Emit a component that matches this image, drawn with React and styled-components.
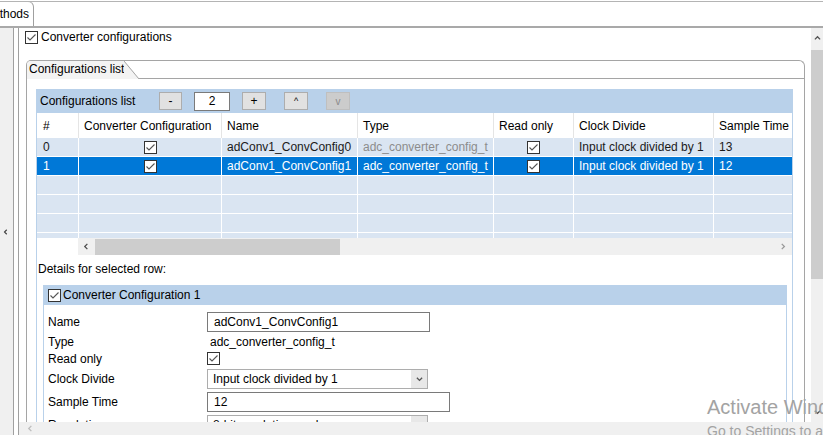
import React from "react";
import styled, { createGlobalStyle } from "styled-components";

const GlobalStyle = createGlobalStyle`
  html, body { margin: 0; padding: 0; background: #fff; }
  body {
    font-family: "Liberation Sans", Arial, sans-serif;
    font-size: 12px;
    color: #000;
  }
  * { box-sizing: border-box; }
`;

const BLUE = "#b9d1ea";
const ROW = "#dae5f2";
const SEL = "#0078d7";
const FRAME = "#a5a5a5";

const Window = styled.div`
  position: relative;
  width: 823px;
  height: 435px;
  overflow: hidden;
  background: #fff;
  display: flex;
  flex-direction: column;
  padding-top: 1px;
`;

const TopBar = styled.div`
  display: flex;
  flex-shrink: 0;
  height: 27px;
  border-top: 1px solid #b4b4b4;
  border-bottom: 2px solid #a9a9a9;
`;

const EditorTab = styled.div`
  width: 34px;
  height: 25px;
  margin-top: -1px;
  border-top: 1px solid #b4b4b4;
  border-right: 1px solid #a0a0a0;
  border-top-right-radius: 6px;
  overflow: hidden;
  white-space: nowrap;
  line-height: 24px;
  font-size: 12px;
  span { margin-left: -17px; }
`;

const Body = styled.div`
  flex: 1;
  display: flex;
  min-height: 0;
`;

const LeftRail = styled.div`
  width: 14px;
  background: #f0f0f0;
  border-right: 1px solid #a0a0a0;
  display: flex;
  align-items: center;
  padding-left: 3px;
`;

const Gutter = styled.div`
  width: 5px;
  border-right: 1px solid #a0a0a0;
`;

const Main = styled.div`
  flex: 1;
  display: flex;
  flex-direction: column;
  min-width: 0;
`;

const MainRow = styled.div`
  flex: 1;
  display: flex;
  min-height: 0;
`;

const Content = styled.div`
  flex: 1;
  overflow: hidden;
  padding: 2px 0 0 6px;
`;

const VScroll = styled.div`
  width: 12px;
  background: #f0f0f0;
  display: flex;
  flex-direction: column;
`;

const ScrollArrow = styled.div`
  height: ${(p) => p.h || 20}px;
  display: flex;
  align-items: center;
  justify-content: center;
  padding-right: ${(p) => p.pr || 0}px;
`;

const VThumb = styled.div`
  margin-top: 1px;
  height: 229px;
  background: #cdcdcd;
`;

const VTrack = styled.div`
  flex: 1;
`;

const HScroll = styled.div`
  height: 13px;
  background: #f0f0f0;
  display: flex;
  align-items: center;
  padding-left: 8px;
`;

const CheckRow = styled.div`
  display: flex;
  align-items: center;
  gap: 3px;
  height: 14px;
  line-height: 14px;
`;

const Box = styled.span`
  display: inline-flex;
  width: 13px;
  height: 13px;
  flex-shrink: 0;
  border: 1px solid #333;
  background: #fff;
  align-items: center;
  justify-content: center;
`;

const Folder = styled.div`
  margin: 16px 0 0 1px;
  width: 779px;
  height: 400px;
  border: 1px solid ${FRAME};
  border-bottom: none;
  border-radius: 5px 6px 0 0;
  overflow: hidden;
`;

const FolderTabs = styled.div`
  display: flex;
  height: 18px;
`;

const FolderTab = styled.div`
  position: relative;
  padding-left: 2px;
  line-height: 17px;
  background: #f3f3f3;
  &::after {
    content: "";
    position: absolute;
    left: 100%;
    top: 0;
    width: 15px;
    height: 18px;
    background: linear-gradient(
      to top right,
      #f3f3f3 calc(50% - 0.8px),
      ${FRAME} 50%,
      #fff calc(50% + 0.8px)
    );
  }
`;

const TabFill = styled.div`
  flex: 1;
  margin-left: 15px;
  border-bottom: 1px solid ${FRAME};
`;

const FolderBody = styled.div`
  padding: 10px 11px 0 9px;
`;

const Panel = styled.div`
  border-left: 1px solid ${BLUE};
  border-right: 1px solid ${BLUE};
  height: 360px;
`;

const ListBar = styled.div`
  height: 24px;
  background: ${BLUE};
  display: flex;
  align-items: center;
  gap: 12px;
  padding-left: 3px;
`;

const BarTitle = styled.span`
  width: 107px;
  white-space: nowrap;
`;

const BarButton = styled.div`
  width: ${(p) => p.w}px;
  height: 18px;
  margin-left: ${(p) => p.ml || 0}px;
  background: ${(p) => (p.disabled ? "#cccccc" : "#e1e1e1")};
  border: 1px solid ${(p) => (p.disabled ? "#bfbfbf" : "#adadad")};
  color: ${(p) => (p.disabled ? "#8a8a8a" : "#000")};
  display: flex;
  align-items: center;
  justify-content: center;
  font-size: ${(p) => p.fs || 12}px;
`;

const CountBox = styled.div`
  width: 36px;
  height: 19px;
  background: #fff;
  border: 1px solid #7a7a7a;
  display: flex;
  align-items: center;
  justify-content: center;
`;

const Grid = styled.div`
  display: grid;
  grid-template-columns: 41px 143px 136px 136px 80px 140px 90px;
  overflow: hidden;
`;

const HeadRow = styled(Grid)`
  height: 25px;
  background: #fff;
`;

const HeadCell = styled.div`
  display: flex;
  align-items: center;
  white-space: nowrap;
  overflow: hidden;
  padding-left: 5px;
  border-left: 1px solid #e5e5e5;
  &:first-child { border-left: none; padding-left: 6px; }
`;

const TableBody = styled.div`
  height: 100px;
  overflow: hidden;
`;

const BodyRow = styled(Grid)`
  height: 19px;
  border-bottom: 1px solid #fff;
  background: ${(p) => (p.selected ? SEL : ROW)};
  color: ${(p) => (p.selected ? "#fff" : "#1a1a1a")};
`;

const Cell = styled.div`
  display: flex;
  align-items: center;
  justify-content: ${(p) => (p.center ? "center" : "flex-start")};
  white-space: nowrap;
  overflow: hidden;
  padding-left: ${(p) => (p.center ? 0 : 5)}px;
  border-left: 1px solid #fff;
  color: ${(p) => p.muted || "inherit"};
  &:first-child { border-left: none; padding-left: 6px; }
`;

const TableScroll = styled.div`
  display: flex;
  height: 17px;
`;

const ScrollGap = styled.div`
  width: 41px;
  background: #fff;
`;

const HBar = styled.div`
  flex: 1;
  display: flex;
  align-items: center;
  background: #f0f0f0;
`;

const HThumb = styled.div`
  width: 245px;
  height: 16px;
  background: #cdcdcd;
`;

const DetailsLabel = styled.div`
  height: 30px;
  padding: 6px 0 0 1px;
  line-height: 16px;
`;

const Group = styled.div`
  margin: 0 5px 0 6px;
  border-left: 1px solid ${BLUE};
  border-right: 1px solid ${BLUE};
  height: 160px;
`;

const GroupHeader = styled.div`
  height: 20px;
  background: ${BLUE};
  display: flex;
  align-items: center;
  gap: 2px;
  padding-left: 4px;
`;

const Fields = styled.div`
  display: grid;
  grid-template-columns: 159px 1fr;
  grid-template-rows: 20px 14px 14px 20px 20px 20px;
  row-gap: 3px;
  align-items: center;
  padding: 7px 0 0 4px;
`;

const Label = styled.div`
  white-space: nowrap;
  align-self: ${(p) => p.align || "center"};
  line-height: 14px;
`;

const TextInput = styled.div`
  width: ${(p) => p.w}px;
  height: 20px;
  border: 1px solid #7a7a7a;
  background: #fff;
  padding-left: 6px;
  display: flex;
  align-items: center;
  white-space: nowrap;
`;

const Value = styled.div`
  padding-left: 3px;
  white-space: nowrap;
`;

const Select = styled.div`
  width: 221px;
  height: 20px;
  border: 1px solid #adadad;
  background: #fff;
  display: flex;
  align-items: stretch;
`;

const SelectText = styled.div`
  flex: 1;
  display: flex;
  align-items: center;
  padding-left: 5px;
  white-space: nowrap;
`;

const SelectArrow = styled.div`
  width: 16px;
  background: #e8e8e8;
  display: flex;
  align-items: center;
  justify-content: center;
`;

const Watermark = styled.div`
  position: absolute;
  left: 707px;
  top: ${(p) => p.top}px;
  font-size: ${(p) => p.size}px;
  color: #a3a3a3;
  white-space: nowrap;
  pointer-events: none;
`;

const Check = ({ color = "#555" }) => (
  <Box>
    <svg width="11" height="11" viewBox="0 0 11 11">
      <polyline points="1.5,5.5 4,8 9.5,2.5" fill="none" stroke={color} strokeWidth="1.1" />
    </svg>
  </Box>
);

const Chevron = ({ dir = "down", color = "#606060", size = 7 }) => {
  const pts = {
    down: "1,2 4,5 7,2",
    up: "1,5 4,2 7,5",
    left: "5,1 2,4 5,7",
    right: "2,1 5,4 2,7",
  }[dir];
  return (
    <svg width={size} height={size} viewBox="0 0 8 8">
      <polyline points={pts} fill="none" stroke={color} strokeWidth="1.5" />
    </svg>
  );
};

const columns = [
  "#",
  "Converter Configuration",
  "Name",
  "Type",
  "Read only",
  "Clock Divide",
  "Sample Time",
];

const rows = [
  { id: 0, name: "adConv1_ConvConfig0", type: "adc_converter_config_t", clock: "Input clock divided by 1", time: "13" },
  { id: 1, name: "adConv1_ConvConfig1", type: "adc_converter_config_t", clock: "Input clock divided by 1", time: "12", selected: true },
];

export default function App() {
  return (
    <>
      <GlobalStyle />
      <Window>
        <TopBar>
          <EditorTab>
            <span>Methods</span>
          </EditorTab>
        </TopBar>
        <Body>
          <LeftRail>
            <Chevron dir="left" color="#404040" size={6} />
          </LeftRail>
          <Gutter />
          <Main>
            <MainRow>
              <Content>
                <CheckRow>
                  <Check />
                  Converter configurations
                </CheckRow>
                <Folder>
                  <FolderTabs>
                    <FolderTab>Configurations list</FolderTab>
                    <TabFill />
                  </FolderTabs>
                  <FolderBody>
                    <Panel>
                      <ListBar>
                        <BarTitle>Configurations list</BarTitle>
                        <BarButton w={23}>-</BarButton>
                        <CountBox>2</CountBox>
                        <BarButton w={24}>+</BarButton>
                        <BarButton w={24} ml={6} fs={9}>^</BarButton>
                        <BarButton w={24} ml={6} fs={10} disabled>v</BarButton>
                      </ListBar>
                      <HeadRow>
                        {columns.map((c) => (
                          <HeadCell key={c}>{c}</HeadCell>
                        ))}
                      </HeadRow>
                      <TableBody>
                        {rows.map((r) => (
                          <BodyRow key={r.id} selected={r.selected}>
                            <Cell>{r.id}</Cell>
                            <Cell center>
                              <Check />
                            </Cell>
                            <Cell>{r.name}</Cell>
                            <Cell muted={r.selected ? null : "#8c8c8c"}>{r.type}</Cell>
                            <Cell center>
                              <Check />
                            </Cell>
                            <Cell>{r.clock}</Cell>
                            <Cell>{r.time}</Cell>
                          </BodyRow>
                        ))}
                        {[0, 1, 2, 3].map((i) => (
                          <BodyRow key={"e" + i}>
                            {columns.map((c) => (
                              <Cell key={c} />
                            ))}
                          </BodyRow>
                        ))}
                      </TableBody>
                      <TableScroll>
                        <ScrollGap />
                        <HBar>
                          <ScrollArrow h={16} style={{ width: 17 }}>
                            <Chevron dir="left" color="#505050" />
                          </ScrollArrow>
                          <HThumb />
                          <div style={{ flex: 1 }} />
                          <ScrollArrow h={16} style={{ width: 17 }}>
                            <Chevron dir="right" color="#9a9a9a" />
                          </ScrollArrow>
                        </HBar>
                      </TableScroll>
                      <DetailsLabel>Details for selected row:</DetailsLabel>
                      <Group>
                        <GroupHeader>
                          <Check />
                          Converter Configuration 1
                        </GroupHeader>
                        <Fields>
                          <Label>Name</Label>
                          <TextInput w={223}>adConv1_ConvConfig1</TextInput>
                          <Label>Type</Label>
                          <Value>adc_converter_config_t</Value>
                          <Label>Read only</Label>
                          <div style={{ alignSelf: "start", display: "flex" }}>
                            <Check />
                          </div>
                          <Label>Clock Divide</Label>
                          <Select>
                            <SelectText>Input clock divided by 1</SelectText>
                            <SelectArrow>
                              <Chevron dir="down" color="#555" />
                            </SelectArrow>
                          </Select>
                          <Label>Sample Time</Label>
                          <TextInput w={243}>12</TextInput>
                          <Label>Resolution</Label>
                          <Select>
                            <SelectText>8-bit resolution mode</SelectText>
                            <SelectArrow>
                              <Chevron dir="down" color="#555" />
                            </SelectArrow>
                          </Select>
                        </Fields>
                      </Group>
                    </Panel>
                  </FolderBody>
                </Folder>
              </Content>
              <VScroll>
                <ScrollArrow h={21}>
                  <Chevron dir="up" color="#505050" />
                </ScrollArrow>
                <VThumb />
                <VTrack />
                <ScrollArrow h={20}>
                  <Chevron dir="down" color="#505050" />
                </ScrollArrow>
              </VScroll>
            </MainRow>
            <HScroll>
              <Chevron dir="left" color="#bdbdbd" />
            </HScroll>
          </Main>
        </Body>
        <Watermark top={396} size={20}>Activate Windows</Watermark>
        <Watermark top={423} size={14}>Go to Settings to activate Windows.</Watermark>
      </Window>
    </>
  );
}
